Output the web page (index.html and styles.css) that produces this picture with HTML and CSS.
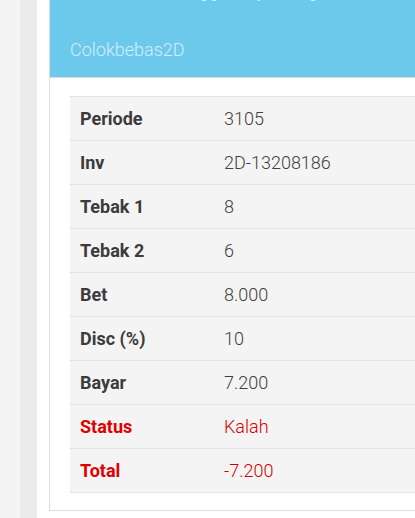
FILE: index.html
```html
<!DOCTYPE html>
<html>
<head>
<meta charset="utf-8">
<link rel="stylesheet" href="styles.css">
</head>
<body>
<div class="layout">
  <div class="rail-a"></div>
  <div class="rail-b"></div>
  <main class="main">
    <section class="card">
      <header class="card-head">
        <div class="head-top">Tanggal bayaran, giliran</div>
        <div class="head-title">Colokbebas2D</div>
      </header>
      <div class="card-body">
        <table class="detail">
          <tr><th>Periode</th><td>3105</td></tr>
          <tr><th>Inv</th><td>2D-13208186</td></tr>
          <tr><th>Tebak 1</th><td>8</td></tr>
          <tr><th>Tebak 2</th><td>6</td></tr>
          <tr><th>Bet</th><td>8.000</td></tr>
          <tr><th>Disc (%)</th><td>10</td></tr>
          <tr><th>Bayar</th><td>7.200</td></tr>
          <tr class="red"><th>Status</th><td>Kalah</td></tr>
          <tr class="red"><th>Total</th><td>-7.200</td></tr>
        </table>
      </div>
    </section>
  </main>
</div>
</body>
</html>
```

FILE: styles.css
```css
html, body {
  margin: 0;
  padding: 0;
  overflow: hidden;
  background: #ffffff;
  font-family: Roboto, "Liberation Sans", sans-serif;
}
.layout {
  display: flex;
  height: 518px;
}
.rail-a {
  width: 20px;
  flex: none;
  background: #f4f4f4;
}
.rail-b {
  width: 17px;
  flex: none;
  background: #ebebeb;
}
.main {
  flex: none;
  width: 420px;
  padding-left: 13px;
  background: #fff;
}
.card {
  width: 420px;
  border-left: 1px solid #dddddd;
  border-bottom: 1px solid #dddddd;
  margin-left: -1px;
  margin-top: -21px;
}
.card-head {
  background: #6dc9ec;
  padding: 0 20px;
  height: 99px;
  box-sizing: border-box;
  border-bottom: 1px solid #dcdcdc;
}
.head-top {
  font-size: 18px;
  font-weight: 300;
  line-height: 24px;
  color: rgba(255,255,255,0.7);
  padding-left: 100px;
}
.head-title {
  font-size: 18px;
  font-weight: 300;
  line-height: 24px;
  margin-top: 35px;
  color: rgba(255,255,255,0.7);
}
.card-body {
  padding: 18px 0 17px 20px;
}
.detail {
  width: 400px;
  border-collapse: collapse;
  background: #f4f4f4;
}
.detail tr {
  border-top: 1px solid #e3e3e3;
  border-bottom: 1px solid #e3e3e3;
}
.detail th,
.detail td {
  height: 43px;
  padding: 0 10px;
  font-size: 18px;
  text-align: left;
  vertical-align: middle;
}
.detail th {
  width: 124px;
  font-weight: 700;
  color: #3b3b3b;
}
.detail td {
  font-weight: 300;
  color: #3f3f3f;
}
.detail tr.red th {
  color: #e00000;
}
.detail tr.red td {
  color: #d40000;
}
```
